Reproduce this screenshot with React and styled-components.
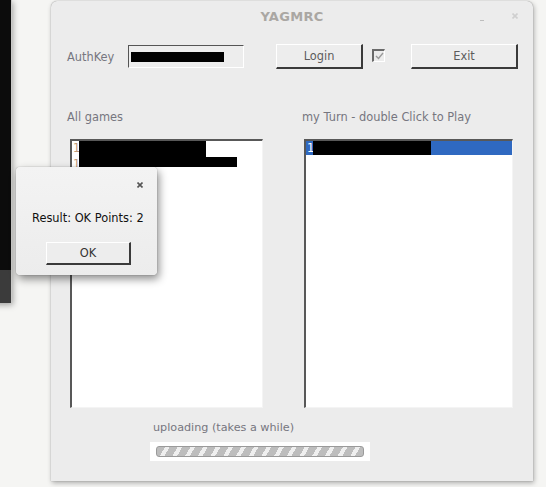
import styled, { createGlobalStyle } from "styled-components"

const Global = createGlobalStyle`
  html, body {
    margin: 0;
    padding: 0;
    background: #f5f5f3;
    font-family: "DejaVu Sans", "Liberation Sans", sans-serif;
  }
`

const Desktop = styled.div`
  position: relative;
  width: 546px;
  height: 487px;
  overflow: hidden;
  background: #f5f5f3;
`

// window behind, only its edge shows
const BackWindow = styled.div`
  position: absolute;
  left: -200px;
  top: 0;
  width: 211px;
  height: 303px;
  background: linear-gradient(#0c0c0c 0, #0c0c0c 270px, #3b3b3b 270px);
  box-shadow: 1px 0 0 #c9c9c7, 2px 2px 6px rgba(0,0,0,0.35);
`

const Window = styled.div`
  position: absolute;
  left: 51px;
  top: 1px;
  width: 482px;
  height: 480px;
  background: #ececec;
  border-radius: 6px 6px 0 0;
  box-shadow: 0 0 1px rgba(0,0,0,0.45), 1px 2px 5px rgba(0,0,0,0.3);
  display: flex;
  flex-direction: column;
  font-size: 11.4px;
  color: #76767f;
`

const TitleBar = styled.div`
  height: 30px;
  display: grid;
  grid-template-columns: 1fr auto 1fr;
  align-items: center;
`

const Title = styled.div`
  grid-column: 2;
  font-weight: bold;
  font-size: 13px;
  color: #aaa7a3;
  letter-spacing: 0.3px;
`

const Controls = styled.div`
  justify-self: end;
  display: flex;
  align-items: center;
  gap: 28px;
  padding-right: 15px;
`

const Minimize = styled.span`
  width: 4px;
  height: 1px;
  margin-top: 8px;
  background: #bdbdbd;
`

const TopRow = styled.div`
  margin-top: 13px;
  height: 25px;
  display: flex;
  align-items: center;
  padding-left: 16px;
`

const FieldLabel = styled.span`
  width: 61px;
`

const KeyInput = styled.div`
  width: 116px;
  height: 23px;
  box-sizing: border-box;
  border: 1px solid;
  border-color: #555 #fff #fff #555;
  background: #ededed;
  display: flex;
  align-items: center;
  padding-left: 2px;
`

const Masked = styled.span`
  display: block;
  align-self: ${p => (p.$center ? "center" : "flex-start")};
  width: ${p => p.w}px;
  height: ${p => p.h || 10}px;
  background: #000;
`

const Button = styled.button`
  margin-left: ${p => p.gap}px;
  width: ${p => p.w}px;
  height: 25px;
  box-sizing: border-box;
  border-style: solid;
  border-width: 1px 2px 2px 1px;
  border-color: #fff #3a3a3a #3a3a3a #fff;
  background: #ededed;
  font-family: inherit;
  font-size: 11.4px;
  color: #5c5c5c;
  padding: 0;
  padding-bottom: 1px;
`

const Check = styled.span`
  margin-left: 9px;
  margin-top: -3px;
  width: 13px;
  height: 13px;
  box-sizing: border-box;
  border-style: solid;
  border-width: 2px 1px 1px 2px;
  border-color: #6a6a6a #fff #fff #6a6a6a;
  display: flex;
  align-items: center;
  justify-content: center;
`

const LabelRow = styled.div`
  margin-top: 40px;
  height: 16px;
  display: grid;
  grid-template-columns: 235px 1fr;
  padding-left: 16px;
  align-items: center;
`

const Lists = styled.div`
  margin-top: 14px;
  display: flex;
  padding-left: 19px;
  gap: 41px;
`

const ListBox = styled.div`
  width: ${p => p.w}px;
  height: 269px;
  box-sizing: border-box;
  background: #fff;
  border-style: solid;
  border-width: 2px 1px 1px 2px;
  border-color: #585858 #f4f4f4 #f4f4f4 #585858;
  display: flex;
  flex-direction: column;
`

const Row = styled.div`
  display: flex;
  align-items: flex-start;
  height: ${p => p.h}px;
  background: ${p => (p.selected ? "#2f69c1" : "transparent")};
  color: ${p => (p.selected ? "#fff" : "#c09a78")};
  font-size: 11.4px;
  overflow: hidden;
`

const Index = styled.span`
  width: 6px;
  padding-left: 1px;
  line-height: 14px;
`

const UploadLabel = styled.div`
  margin-top: 11px;
  height: 16px;
  padding-left: 102px;
  display: flex;
  align-items: center;
  font-size: 11.2px;
`

const ProgressBox = styled.div`
  margin-top: 7px;
  margin-left: 99px;
  width: 220px;
  height: 19px;
  box-sizing: border-box;
  background: #fff;
  padding: 4px 6px;
`

const ProgressBar = styled.div`
  height: 11px;
  box-sizing: border-box;
  border: 1px solid #9a9a9a;
  border-radius: 3px;
  background: repeating-linear-gradient(
    -60deg,
    #bdbdbd 0,
    #bdbdbd 7px,
    #efefef 7px,
    #efefef 11px
  );
`

const Dialog = styled.div`
  position: absolute;
  left: 16px;
  top: 167px;
  width: 141px;
  height: 108px;
  box-sizing: border-box;
  background: linear-gradient(#f3f3f3, #ececec);
  border-radius: 4px;
  box-shadow: 0 0 1px rgba(0,0,0,0.5), 2px 4px 9px rgba(0,0,0,0.45);
  display: flex;
  flex-direction: column;
  font-size: 11.4px;
  color: #111;
`

const DialogClose = styled.div`
  height: 34px;
  display: flex;
  justify-content: flex-end;
  align-items: center;
  padding-right: 14px;
  padding-top: 2px;
  box-sizing: border-box;
`

const Message = styled.div`
  height: 34px;
  padding-left: 16px;
  display: flex;
  align-items: center;
`

const OkButton = styled(Button)`
  margin-top: 7px;
  height: 23px;
  color: #333;
`

const Cross = ({ color, size = 6 }) => (
  <svg width={size} height={size} viewBox="0 0 6 6">
    <path d="M0.5 0.5 L5.5 5.5 M5.5 0.5 L0.5 5.5" stroke={color} strokeWidth="1.6" />
  </svg>
)

export default function App() {
  return (
    <>
      <Global />
      <Desktop>
        <BackWindow />
        <Window>
          <TitleBar>
            <Title>YAGMRC</Title>
            <Controls>
              <Minimize />
              <Cross color="#cfcfcf" />
            </Controls>
          </TitleBar>
          <TopRow>
            <FieldLabel>AuthKey</FieldLabel>
            <KeyInput>
              <Masked w={93} $center />
            </KeyInput>
            <Button gap={32} w={87}>Login</Button>
            <Check>
              <svg width="9" height="8" viewBox="0 0 9 8">
                <path d="M1 4 L3.5 6.5 L8 1" fill="none" stroke="#9a9a9a" strokeWidth="1.4" />
              </svg>
            </Check>
            <Button gap={26} w={107}>Exit</Button>
          </TopRow>
          <LabelRow>
            <span>All games</span>
            <span>my Turn - double Click to Play</span>
          </LabelRow>
          <Lists>
            <ListBox w={193}>
              <Row h={16}>
                <Index>1</Index>
                <Masked w={127} h={16} />
              </Row>
              <Row h={14}>
                <Index>1</Index>
                <Masked w={158} h={10} />
              </Row>
            </ListBox>
            <ListBox w={209}>
              <Row h={14} selected>
                <Index>1</Index>
                <Masked w={118} h={14} />
              </Row>
            </ListBox>
          </Lists>
          <UploadLabel>uploading (takes a while)</UploadLabel>
          <ProgressBox>
            <ProgressBar />
          </ProgressBox>
        </Window>
        <Dialog>
          <DialogClose>
            <Cross color="#555" />
          </DialogClose>
          <Message>Result: OK Points: 2</Message>
          <OkButton gap={30} w={85}>OK</OkButton>
        </Dialog>
      </Desktop>
    </>
  )
}
